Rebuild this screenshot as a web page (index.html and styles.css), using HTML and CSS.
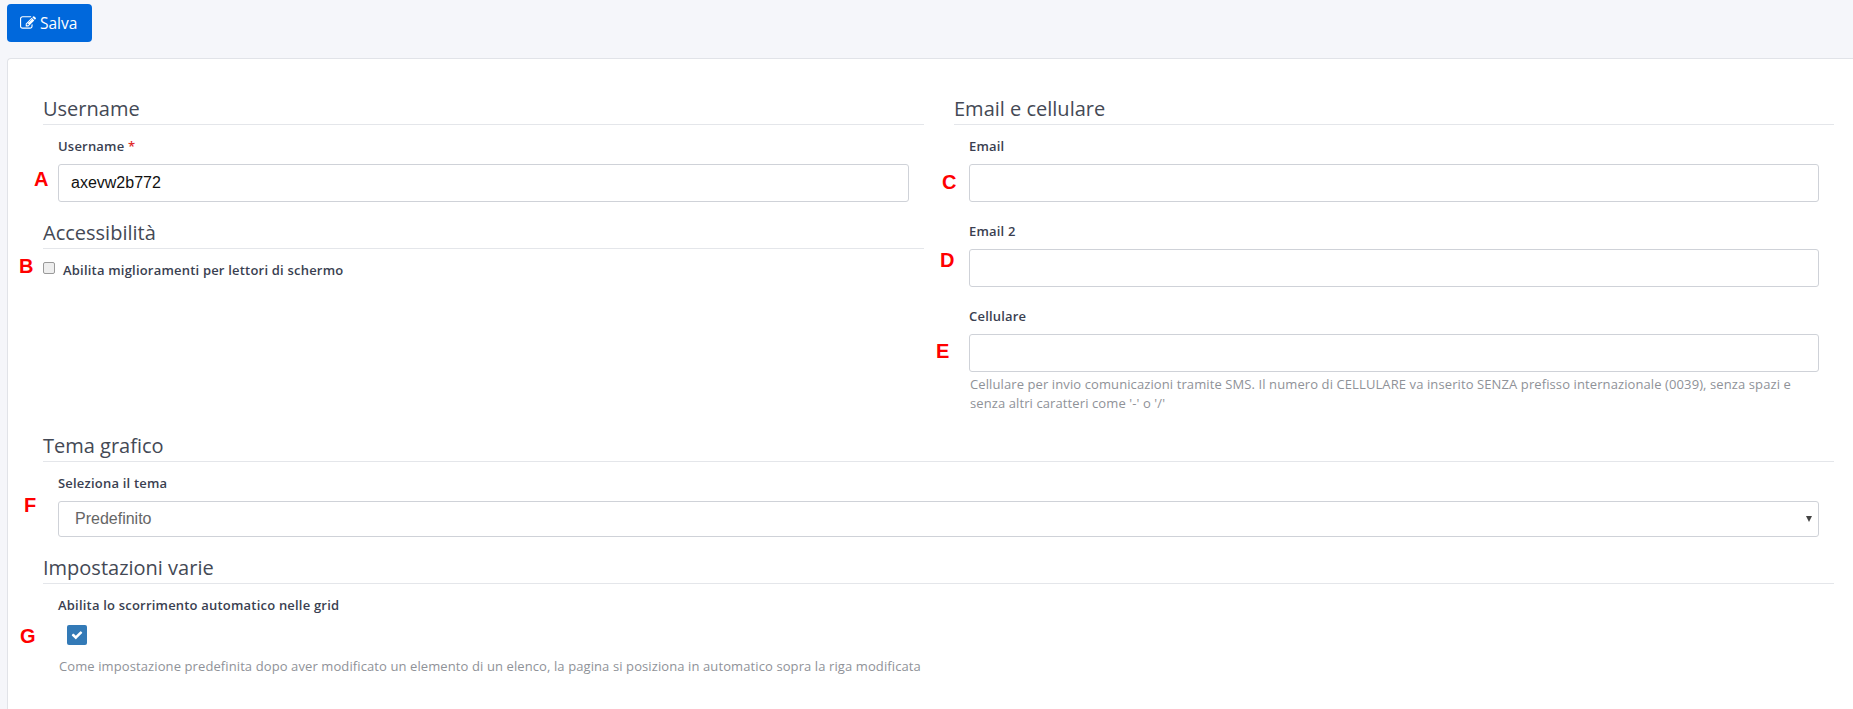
FILE: index.html
```html
<!DOCTYPE html>
<html lang="it">
<head>
<meta charset="utf-8">
<title>Profilo</title>
<link rel="stylesheet" href="styles.css">
</head>
<body>
<div class="page">
  <div class="toolbar">
    <button class="btn-save" type="button">
      <svg class="btn-icon" viewBox="0 0 1792 1792"><path fill="currentColor" d="M888 1184l116-116-152-152-116 116v56h96v96h56zm440-720q-16-16-33 1l-350 350q-17 17-1 33t33-1l350-350q17-17 1-33zm80 594v190q0 119-84.500 203.500t-203.500 84.500h-832q-119 0-203.500-84.500t-84.500-203.500v-832q0-119 84.500-203.500t203.500-84.500h832q63 0 117 25 15 7 18 23 3 17-9 29l-49 49q-14 14-32 8-23-6-45-6h-832q-66 0-113 47t-47 113v832q0 66 47 113t113 47h832q66 0 113-47t47-113v-126q0-13 9-22l64-64q15-15 35-7t20 29zm-96-738l288 288-672 672h-288v-288zm444 132l-92 92-288-288 92-92q28-28 68-28t68 28l152 152q28 28 28 68t-28 68z"/></svg>
      <span>Salva</span>
    </button>
  </div>
  <main class="card">
    <div class="columns">
      <div class="column">
        <section class="section">
          <h2 class="section-title">Username</h2>
          <div class="field">
            <label class="field-label">Username <span class="required">*</span></label>
            <input class="text-input" type="text" value="axevw2b772">
          </div>
        </section>
        <section class="section section-access">
          <h2 class="section-title">Accessibilità</h2>
          <label class="check-row"><input class="native-check" type="checkbox"><span>Abilita miglioramenti per lettori di schermo</span></label>
        </section>
      </div>
      <div class="column">
        <section class="section">
          <h2 class="section-title">Email e cellulare</h2>
          <div class="field">
            <label class="field-label">Email</label>
            <input class="text-input" type="text">
          </div>
          <div class="field field-next">
            <label class="field-label">Email 2</label>
            <input class="text-input" type="text">
          </div>
          <div class="field field-next">
            <label class="field-label">Cellulare</label>
            <input class="text-input" type="text">
            <p class="hint hint-phone">Cellulare per invio comunicazioni tramite SMS. Il numero di CELLULARE va inserito SENZA prefisso internazionale (0039), senza spazi e senza altri caratteri come '-' o '/'</p>
          </div>
        </section>
      </div>
    </div>
    <section class="section section-theme">
      <h2 class="section-title">Tema grafico</h2>
      <div class="field">
        <label class="field-label">Seleziona il tema</label>
        <div class="select-box"><span>Predefinito</span><span class="caret"></span></div>
      </div>
    </section>
    <section class="section section-misc">
      <h2 class="section-title">Impostazioni varie</h2>
      <div class="field">
        <label class="field-label">Abilita lo scorrimento automatico nelle grid</label>
        <span class="fancy-check">
          <svg class="fancy-check-icon" viewBox="0 0 1792 1792"><path fill="currentColor" d="M1671 566q0 40-28 68l-724 724-136 136q-28 28-68 28t-68-28l-136-136-362-362q-28-28-28-68t28-68l136-136q28-28 68-28t68 28l294 295 656-657q28-28 68-28t68 28l136 136q28 28 28 68z"/></svg>
        </span>
        <p class="hint hint-misc">Come impostazione predefinita dopo aver modificato un elemento di un elenco, la pagina si posiziona in automatico sopra la riga modificata</p>
      </div>
    </section>
  </main>
  <span class="mark mark-a">A</span>
  <span class="mark mark-b">B</span>
  <span class="mark mark-c">C</span>
  <span class="mark mark-d">D</span>
  <span class="mark mark-e">E</span>
  <span class="mark mark-f">F</span>
  <span class="mark mark-g">G</span>
</div>
</body>
</html>
```

FILE: styles.css
```css
html, body {
  margin: 0;
  height: 100%;
  overflow: hidden;
}
body {
  background: #f5f6fa;
  font-family: "Open Sans", "Liberation Sans", sans-serif;
  font-size: 13px;
  color: #3a3f51;
}
.page {
  position: relative;
  height: 709px;
}
.toolbar {
  padding: 4px 0 0 7px;
  height: 58px;
  box-sizing: border-box;
}
.btn-save {
  display: flex;
  align-items: center;
  gap: 4px;
  height: 38px;
  width: 85px;
  padding: 0 0 0 13px;
  border: 0;
  border-radius: 4px;
  background: #0068dc;
  color: #fff;
  font-family: "Open Sans", sans-serif;
  font-size: 15.5px;
}
.btn-icon {
  width: 16px;
  height: 16px;
}
.card {
  margin-left: 7px;
  height: 651px;
  box-sizing: border-box;
  padding: 35px 19px 0 35px;
  background: #fff;
  border-top: 1px solid #e1e3e8;
  border-left: 1px solid #e1e3e8;
  border-top-left-radius: 4px;
}
.columns {
  display: grid;
  grid-template-columns: 881px 880px;
  column-gap: 30px;
}
.section-title {
  margin: 0;
  padding: 1px 0 2px;
  border-bottom: 1px solid #e4e6ea;
  font-size: 20px;
  line-height: 27px;
  font-weight: 400;
  color: #444955;
}
.field {
  padding: 0 15px;
}
.field-label {
  display: block;
  box-sizing: border-box;
  height: 39px;
  padding-top: 12px;
  line-height: 18px;
  font-size: 13px;
  font-weight: 600;
  letter-spacing: .2px;
}
.required {
  color: #e02b2b;
}
.field-next {
  padding-top: 8px;
}
.text-input {
  display: block;
  width: 100%;
  height: 38px;
  box-sizing: border-box;
  padding: 0 12px;
  border: 1px solid #cfd2d8;
  border-radius: 3px;
  background: #fff;
  font-family: "Liberation Sans", sans-serif;
  font-size: 16px;
  color: #111;
  outline: none;
}
.section-access {
  margin-top: 16px;
}
.check-row {
  display: flex;
  align-items: flex-start;
  gap: 8px;
  padding-top: 12px;
  font-size: 13px;
  font-weight: 600;
  letter-spacing: .2px;
  line-height: 18px;
}
.native-check {
  appearance: none;
  margin: 1px 0 0;
  width: 12px;
  height: 12px;
  box-sizing: border-box;
  border: 1px solid #9a9a9a;
  border-radius: 2px;
  background: #eee;
}
.hint {
  margin: 0;
  font-size: 13px;
  letter-spacing: .1px;
  line-height: 19px;
  color: #8f9298;
}
.hint-phone {
  padding: 3px 0 0 1px;
}
.section-theme {
  margin-top: 18px;
}
.select-box {
  display: flex;
  justify-content: space-between;
  align-items: center;
  height: 36px;
  box-sizing: border-box;
  padding: 0 6px 0 16px;
  border: 1px solid #cfd2d8;
  border-radius: 3px;
  font-family: "Liberation Sans", sans-serif;
  font-size: 16px;
  color: #666;
}
.caret {
  width: 0;
  height: 0;
  border-left: 3px solid transparent;
  border-right: 3px solid transparent;
  border-top: 6px solid #444;
}
.section-misc {
  margin-top: 16px;
}
.fancy-check {
  display: flex;
  align-items: center;
  justify-content: center;
  width: 20px;
  height: 20px;
  margin: 2px 0 0 9px;
  border-radius: 2px;
  background: #337ab7;
  color: #fff;
}
.fancy-check-icon {
  width: 12px;
  height: 12px;
}
.hint-misc {
  padding: 12px 0 0 1px;
}
.mark {
  position: absolute;
  font-family: "Liberation Sans", sans-serif;
  font-size: 20px;
  font-weight: 700;
  line-height: 20px;
  color: #f00;
}
.mark-a { left: 34px; top: 169px; }
.mark-b { left: 19px; top: 256px; }
.mark-c { left: 942px; top: 172px; }
.mark-d { left: 940px; top: 250px; }
.mark-e { left: 936px; top: 341px; }
.mark-f { left: 24px; top: 495px; }
.mark-g { left: 20px; top: 626px; }
```
